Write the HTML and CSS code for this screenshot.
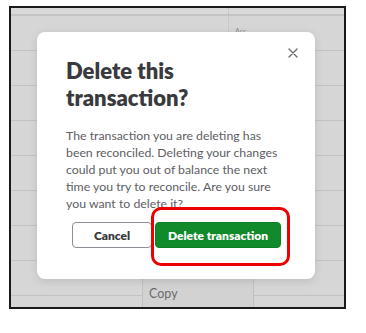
FILE: index.html
```html
<!DOCTYPE html>
<html>
<head>
<meta charset="utf-8">
<link rel="stylesheet" href="styles.css">
</head>
<body>
<div class="frame">
  <div class="grid">
    <div class="head"><span class="vline"></span><span class="acc">Acc</span></div>
    <div class="row"></div>
    <div class="row"></div>
    <div class="row"></div>
    <div class="row"></div>
    <div class="row"></div>
    <div class="row"></div>
    <div class="row"></div>
    <div class="row"></div>
    <div class="row"></div>
  </div>
  <div class="menu"><div class="menu-item">Copy</div></div>
  <div class="dialog">
    <button class="close" aria-label="Close">
      <svg width="10" height="10" viewBox="0 0 10 10"><path d="M1 1L9 9M9 1L1 9" stroke="#6b6c72" stroke-width="1.4" stroke-linecap="round"/></svg>
    </button>
    <h1 class="title">Delete this transaction?</h1>
    <p class="msg">The transaction you are deleting has been reconciled. Deleting your changes could put you out of balance the next time you try to reconcile. Are you sure you want to delete it?</p>
    <div class="actions">
      <button class="btn cancel">Cancel</button>
      <button class="btn primary">Delete transaction</button>
    </div>
  </div>
  <div class="highlight"></div>
</div>
</body>
</html>
```
FILE: styles.css
```css
html, body {
  margin: 0;
  padding: 0;
  background: #ffffff;
  font-family: Lato, "Open Sans", sans-serif;
}
.frame {
  position: relative;
  margin: 6px 0 0 9px;
  width: 333px;
  height: 299px;
  border: 2px solid #1a1a1a;
  background: #d6d6d6;
  overflow: hidden;
}
.grid {
  display: flex;
  flex-direction: column;
}
.head {
  position: relative;
  height: 6px;
  border-bottom: 2px solid #c4c4c4;
  background: #d9d9d9;
}
.vline {
  position: absolute;
  left: 217px;
  top: 0;
  height: 24px;
  border-left: 1px dotted #bdbdbd;
}
.acc {
  position: absolute;
  left: 224px;
  top: 19px;
  font-size: 7px;
  color: #888;
}
.row {
  height: 34px;
  border-bottom: 1px solid #c2c2c2;
  flex: none;
}
.menu {
  position: absolute;
  left: 131px;
  top: 266px;
  width: 110px;
  height: 40px;
  background: #d2d2d2;
  border-left: 1px solid #c0c0c0;
  border-right: 1px solid #c0c0c0;
}
.menu-item {
  padding: 12px 0 0 6px;
  font-size: 12.5px;
  color: #6a6a6a;
}
.dialog {
  position: absolute;
  left: 26px;
  top: 24px;
  width: 278px;
  height: 247px;
  box-sizing: border-box;
  background: #ffffff;
  border-radius: 8px;
  box-shadow: 0 2px 8px rgba(0,0,0,0.12);
  padding: 25px 30px 0 29px;
}
.close {
  position: absolute;
  right: 15px;
  top: 14px;
  width: 14px;
  height: 14px;
  padding: 0;
  border: 0;
  background: none;
  display: flex;
  align-items: center;
  justify-content: center;
}
.title {
  margin: 0;
  font-size: 22px;
  line-height: 27px;
  font-weight: 800;
  color: #393a3d;
  width: 150px;
}
.msg {
  margin: 16px 0 0 0;
  font-size: 12.3px;
  line-height: 17px;
  color: #5d5e63;
}
.actions {
  display: flex;
  gap: 3px;
  margin-top: 10px;
  margin-left: 6px;
}
.btn {
  height: 26px;
  box-sizing: border-box;
  border-radius: 4px;
  font-family: Lato, "Open Sans", sans-serif;
  font-size: 12px;
  font-weight: 800;
  padding: 0;
}
.cancel {
  width: 80px;
  background: #fff;
  border: 1px solid #8d9096;
  color: #393a3d;
}
.primary {
  width: 126px;
  background: #118a2b;
  border: 1px solid #0f7f27;
  color: #fff;
}
.highlight {
  position: absolute;
  left: 140px;
  top: 199px;
  width: 139px;
  height: 59px;
  box-sizing: border-box;
  border: 3px solid #ee0000;
  border-radius: 10px;
}
```
